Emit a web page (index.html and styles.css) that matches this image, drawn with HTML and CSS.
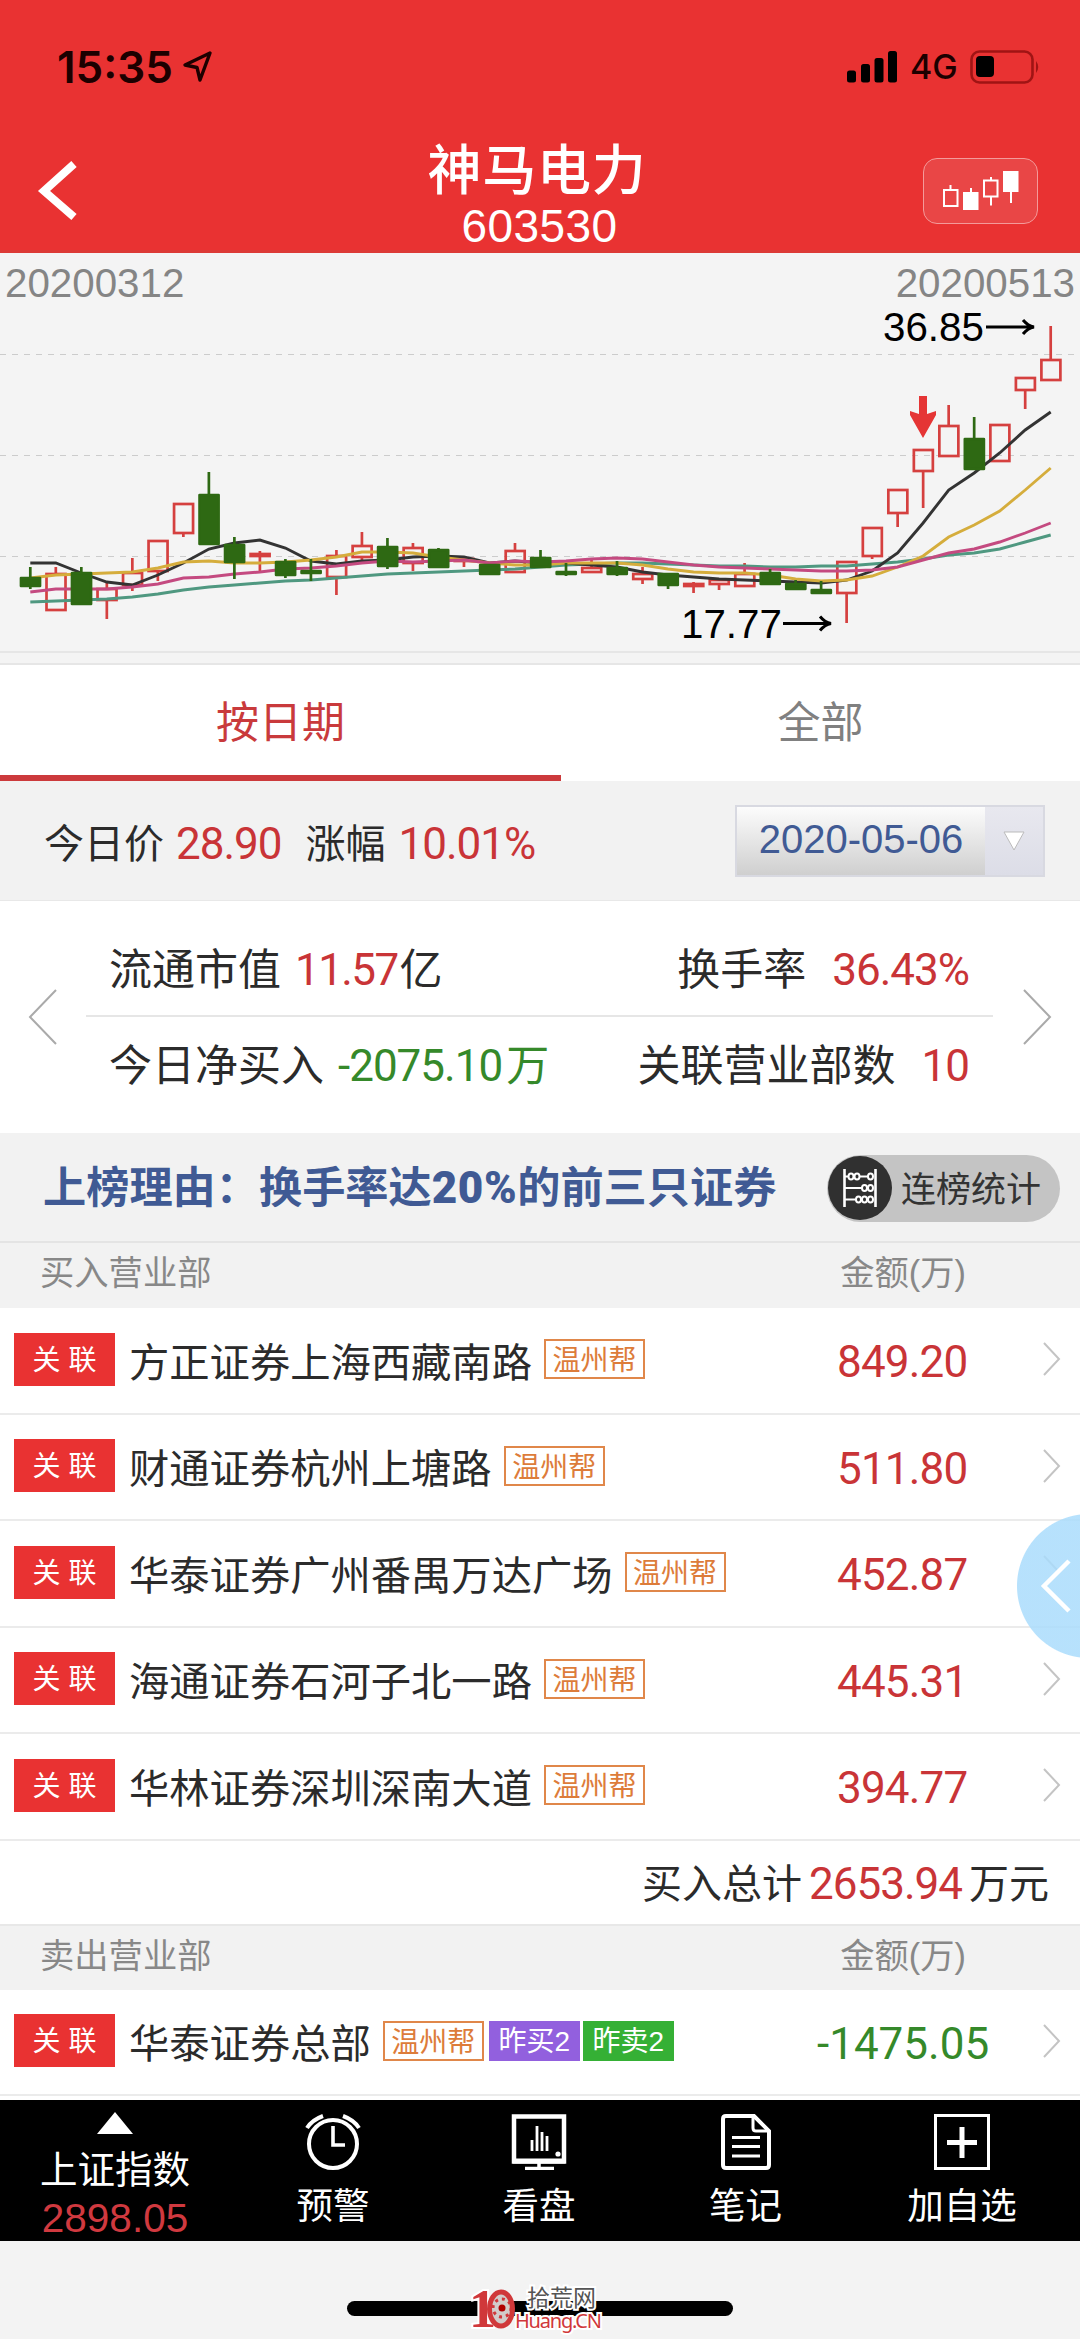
FILE: index.html
```html
<!DOCTYPE html>
<html lang="zh-CN">
<head>
  <meta charset="UTF-8" />
  <meta name="viewport" content="width=device-width, initial-scale=1.0"/>
  <title>神马电力 603530</title>
  <link rel="stylesheet" href="styles.css">
</head>
<body>

  <header class="header">
    <div class="status-bar">
      <div class="status-left">
        <span class="time">15:35</span>
        <svg class="location" width="32" height="34" viewBox="0 0 32 34"><path d="M28 3 L3 15 L15 17.500 L18 30 Z" fill="none" stroke="#1c0000" stroke-width="3.400" stroke-linejoin="round"/></svg>
      </div>
      <div class="status-right">
        <svg width="51" height="32" viewBox="0 0 51 32">
          <rect x="0" y="19.500" width="9" height="12" rx="2.500"/>
          <rect x="14" y="13" width="9" height="18.500" rx="2.500"/>
          <rect x="27.500" y="7" width="9" height="24.500" rx="2.500"/>
          <rect x="41" y="0" width="9" height="31.500" rx="2.500"/>
        </svg>
        <span class="network">4G</span>
        <svg width="72" height="34" viewBox="0 0 72 34">
          <rect x="1.500" y="1.500" width="61" height="31" rx="8" fill="none" stroke="#a01414" stroke-width="2.600"/>
          <rect x="6" y="6" width="18" height="21" rx="4"/>
          <path d="M66 11 q4.500 6 0 12 z" fill="#a01414"/>
        </svg>
      </div>
    </div>
    <div class="nav">
      <svg class="back" width="42" height="62" viewBox="0 0 42 62"><path d="M38 4 L8 31 L38 57" fill="none" stroke="#fff" stroke-width="8"/></svg>
      <div class="title">
        <h1>神马电力</h1>
        <p>603530</p>
      </div>
      <div class="kline-btn">
        <svg width="78" height="42" viewBox="0 0 78 42" fill="none" stroke="#fff" stroke-width="2">
          <rect x="2" y="20" width="13.500" height="16"/><path d="M8.500 15v5"/>
          <rect x="22" y="23" width="13.500" height="16" fill="#fff"/><path d="M29 18v5"/>
          <rect x="42" y="10.500" width="13.500" height="16"/><path d="M49 7v3.500M49 26.500v9"/>
          <rect x="62" y="2" width="13.500" height="19" fill="#fff"/><path d="M69 21v12"/>
        </svg>
      </div>
    </div>
  </header>

  <svg id="chart" class="chart" width="1080" height="412" viewBox="0 0 1080 412">
    <g class="grid">
      <path d="M0 101.500H1080M0 202.500H1080M0 303.500H1080"/>
    </g>
    <path class="frame" d="M0 399H1080M0 411H1080"/>
    <g id="candles"></g>
    <g id="lines"></g>
    <text class="date" x="5" y="44">20200312</text>
    <text class="date" x="1075" y="44" text-anchor="end">20200513</text>
    <text class="price" x="883" y="87.500">36.85</text>
    <path class="arrow" d="M986 74H1033M1023 67Q1028 73 1034 74Q1028 75 1023 81"/>
    <text class="price" x="681" y="384.500">17.77</text>
    <path class="arrow" d="M783 370.500H830M820 363.500Q825 369.500 831 370.500Q825 371.500 820 377.500"/>
    <path class="marker" d="M919 143h8v18l9 -3v4l-13 23l-13 -23v-4l9 3z"/>
  </svg>

  <nav class="tabs">
    <div class="tab active">按日期</div>
    <div class="tab">全部</div>
  </nav>

  <section class="price-bar">
    <div class="today">
      <span>今日价</span><span class="num red">28.90</span>
      <span class="chg">涨幅</span><span class="num red">10.01%</span>
    </div>
    <div class="select">
      <span class="select-value">2020-05-06</span>
      <span class="select-btn"><svg width="22" height="20" viewBox="0 0 22 20"><path d="M1 1H21L11 19Z" fill="#fff" stroke="#bbb"/></svg></span>
    </div>
  </section>

  <section class="stats">
    <svg class="turn" width="30" height="58" viewBox="0 0 30 58"><path d="M28 2L2 29L28 56"/></svg>
    <div class="stats-body">
      <div class="stats-row">
        <div>流通市值<span class="num red tight">11.57</span>亿</div>
        <div>换手率<span class="num red wide">36.43%</span></div>
      </div>
      <div class="stats-row">
        <div>今日净买入<span class="num green">-2075.10</span><span class="green">万</span></div>
        <div>关联营业部数<span class="num red wide">10</span></div>
      </div>
    </div>
    <svg class="turn" width="30" height="58" viewBox="0 0 30 58"><path d="M2 2L28 29L2 56"/></svg>
  </section>

  <section class="reason">
    <h2>上榜理由：换手率达<b>20%</b>的前三只证券</h2>
    <div class="pill">
      <span class="pill-icon">
        <svg width="36" height="38" viewBox="0 0 36 38" fill="none" stroke="#fff" stroke-width="2">
          <path d="M2.500 0V38M33.500 0V38" stroke-width="2.600"/>
          <path d="M2 7.500H6M17 7.500H26M2 19H20M2 30.500H14"/>
          <ellipse cx="9" cy="7.500" rx="2.500" ry="3"/><ellipse cx="15" cy="7.500" rx="2.500" ry="3"/><ellipse cx="28.500" cy="7.500" rx="2.500" ry="3"/>
          <ellipse cx="22.500" cy="19" rx="2.500" ry="3"/><ellipse cx="28.500" cy="19" rx="2.500" ry="3"/>
          <ellipse cx="16.500" cy="30.500" rx="2.500" ry="3"/><ellipse cx="22.500" cy="30.500" rx="2.500" ry="3"/><ellipse cx="28.500" cy="30.500" rx="2.500" ry="3"/>
        </svg>
      </span>
      <span class="pill-text">连榜统计</span>
    </div>
  </section>

  <div class="list-head"><span>买入营业部</span><span class="col-amount">金额(万)</span></div>

  <ul class="list">
    <li class="row">
      <span class="badge">关 联</span><span class="name">方正证券上海西藏南路</span><span class="tag">温州帮</span>
      <span class="amount red">849.20</span>
      <svg class="more" width="18" height="34" viewBox="0 0 18 34"><path d="M1 1L16 17L1 33"/></svg>
    </li>
    <li class="row">
      <span class="badge">关 联</span><span class="name">财通证券杭州上塘路</span><span class="tag">温州帮</span>
      <span class="amount red">511.80</span>
      <svg class="more" width="18" height="34" viewBox="0 0 18 34"><path d="M1 1L16 17L1 33"/></svg>
    </li>
    <li class="row">
      <span class="badge">关 联</span><span class="name">华泰证券广州番禺万达广场</span><span class="tag">温州帮</span>
      <span class="amount red">452.87</span>
      <svg class="more" width="18" height="34" viewBox="0 0 18 34"><path d="M1 1L16 17L1 33"/></svg>
    </li>
    <li class="row">
      <span class="badge">关 联</span><span class="name">海通证券石河子北一路</span><span class="tag">温州帮</span>
      <span class="amount red">445.31</span>
      <svg class="more" width="18" height="34" viewBox="0 0 18 34"><path d="M1 1L16 17L1 33"/></svg>
    </li>
    <li class="row">
      <span class="badge">关 联</span><span class="name">华林证券深圳深南大道</span><span class="tag">温州帮</span>
      <span class="amount red">394.77</span>
      <svg class="more" width="18" height="34" viewBox="0 0 18 34"><path d="M1 1L16 17L1 33"/></svg>
    </li>
  </ul>

  <div class="total">买入总计<span class="num red">2653.94</span>万元</div>

  <div class="list-head second"><span>卖出营业部</span><span class="col-amount">金额(万)</span></div>

  <ul class="list sell">
    <li class="row">
      <span class="badge">关 联</span><span class="name">华泰证券总部</span><span class="tag">温州帮</span><span class="tag purple">昨买2</span><span class="tag lime">昨卖2</span>
      <span class="amount green">-1475.05</span>
      <svg class="more" width="18" height="34" viewBox="0 0 18 34"><path d="M1 1L16 17L1 33"/></svg>
    </li>
  </ul>

  <footer class="toolbar">
    <div class="tool index">
      <svg width="38" height="22" viewBox="0 0 38 22"><path d="M19 0L37 22H1Z" fill="#fff"/></svg>
      <span>上证指数</span>
      <span class="index-value">2898.05</span>
    </div>
    <div class="tool">
      <svg width="56" height="56" viewBox="0 0 56 56" fill="none" stroke="#fff" stroke-width="4">
        <circle cx="28" cy="30" r="24"/><path d="M28 12V31H40" stroke-width="3.600"/><path d="M2 14Q7 6 18 2M54 14Q49 6 38 2"/>
      </svg>
      <span>预警</span>
    </div>
    <div class="tool">
      <svg width="56" height="56" viewBox="0 0 56 56" fill="none" stroke="#fff">
        <rect x="3" y="2.500" width="50" height="45" stroke-width="4.500"/><path d="M2 47H54" stroke-width="5"/><path d="M28 49V54M14 54.500H43" stroke-width="3.500"/>
        <path d="M21 37V26M26 37V12M31 37V18M36 37V22" stroke-width="2.800"/><circle cx="47" cy="40" r="2.600" fill="#fff" stroke="none"/>
      </svg>
      <span>看盘</span>
    </div>
    <div class="tool">
      <svg width="50" height="56" viewBox="0 0 50 56" fill="none" stroke="#fff" stroke-width="4">
        <path d="M5 2H33L48 17V51Q48 54 45 54H5Q2 54 2 51V5Q2 2 5 2Z"/><path d="M32 3V14Q32 17 35 17H47" stroke-width="3"/><path d="M11 23.500H39M11 32.500H39M11 42H39" stroke-width="3"/>
      </svg>
      <span>笔记</span>
    </div>
    <div class="tool">
      <svg width="56" height="56" viewBox="0 0 56 56" fill="none" stroke="#fff">
        <rect x="1.500" y="1.500" width="53" height="53" stroke-width="3"/><path d="M13 28.500H43M28 13V44" stroke-width="5"/>
      </svg>
      <span>加自选</span>
    </div>
  </footer>

  <div class="home">
    <div class="home-bar"></div>
    <div class="watermark">
      <span class="wm-one">1</span>
      <svg class="wm-wheel" width="28" height="40" viewBox="0 0 28 40">
        <ellipse cx="14" cy="20" rx="11.500" ry="17" fill="#d2ccca" stroke="#d0383a" stroke-width="5"/>
        <circle cx="15" cy="19" r="9" fill="none" stroke="#d0383a" stroke-width="3" stroke-dasharray="3 4"/>
        <circle cx="15" cy="19" r="3.500" fill="#b00000"/>
      </svg>
      <div class="wm-text">
        <span class="wm-cn">拾荒网</span>
        <span class="wm-en">Huang.CN</span>
      </div>
    </div>
  </div>

  <div class="float-btn">
    <svg width="32" height="54" viewBox="0 0 32 54"><path d="M29 2L4 27L29 52" fill="none" stroke="#fff" stroke-width="4.500"/></svg>
  </div>

  <script>
    // [color, body top, body bottom, high, low]
    const candles = [
      ["g", 324, 334, 314, 336], ["r", 320, 358, 314, 358], ["g", 319, 352, 314, 352], ["r", 335, 348, 330, 366],
      ["r", 319, 333, 305, 338], ["r", 287, 319, 287, 328], ["r", 250, 281, 250, 284], ["g", 241, 292, 219, 292],
      ["g", 291, 310, 284, 326], ["r", 300, 304, 298, 319], ["g", 308, 323, 306, 325], ["g", 317, 321, 306, 328],
      ["r", 302, 325, 297, 342], ["r", 292, 305, 279, 309], ["g", 293, 314, 285, 316], ["r", 294, 311, 290, 318],
      ["g", 296, 315, 295, 315], ["r", 305, 308, 304, 314], ["g", 311, 322, 311, 322], ["r", 297, 320, 290, 320],
      ["g", 304, 315, 297, 315], ["g", 318, 321, 310, 323], ["r", 314, 320, 306, 320], ["g", 314, 322, 308, 323],
      ["r", 320, 327, 314, 331], ["g", 320, 333, 320, 336], ["r", 330, 333, 329, 340], ["r", 326, 332, 326, 337],
      ["r", 320, 334, 310, 334], ["g", 319, 332, 316, 332], ["g", 330, 337, 327, 337], ["g", 336, 341, 328, 341],
      ["r", 308, 341, 308, 370], ["r", 274, 304, 274, 306], ["r", 236, 261, 236, 274], ["r", 196, 219, 196, 255],
      ["r", 172, 204, 152, 204], ["g", 185, 217, 164, 217], ["r", 171, 209, 171, 209], ["r", 124, 138, 124, 156],
      ["r", 106, 128, 73, 128]
    ];
    const averages = {
      teal: [349,348,347,346,344,341,337,334,332,330,328,327,325,323,321,320,319,318,317,316,314,312,311,310,310,311,312,313,313,314,314,313,313,311,309,306,302,300,296,289,282],
      black: [310,310,320,329,332,322,310,296,290,287,295,308,311,308,307,304,303,304,310,308,310,310,312,314,319,322,324,326,327,328,329,330,327,318,300,270,237,220,200,177,159],
      yellow: [325,322,321,320,319,315,309,308,310,310,309,307,304,299,299,300,304,307,310,312,312,310,310,310,312,316,319,320,320,322,326,328,327,323,314,303,284,272,258,237,215],
      pink: [339,336,336,336,334,331,325,324,321,319,316,315,313,310,308,309,308,307,310,308,309,308,306,305,306,309,312,314,315,316,317,318,318,317,314,307,300,296,289,280,270]
    };
    const xOf = i => 30.3 + i * 25.51;

    let lines = "";
    for (const name in averages) {
      const pts = averages[name].map((y, i) => xOf(i).toFixed(1) + "," + y).join(" ");
      lines += `<polyline class="ma ${name}" points="${pts}"/>`;
    }

    let red = "", green = "";
    candles.forEach(([c, top, bottom, high, low], i) => {
      const x = xOf(i);
      const wick = `<path d="M${x} ${high}V${top}M${x} ${bottom}V${low}"/>`;
      const h = Math.max(bottom - top - 2, 2);
      const body = `<rect x="${x - 9.3}" y="${top + 1}" width="19" height="${h}"/>`;
      if (c === "r") red += wick + body;
      else green += wick + body;
    });
    document.getElementById("candles").innerHTML = `<g class="up">${red}</g>`;
    // green bodies cover the average lines
    document.getElementById("lines").innerHTML = lines + `<g class="down">${green}</g>`;
  </script>

</body>
</html>
```

FILE: styles.css
```css
* {
  box-sizing: border-box;
}

body {
  margin: 0;
  width: 1080px;
  font-family: "Liberation Sans", "Noto Sans CJK SC", sans-serif;
  font-size: 40px;
  line-height: 1;
  color: #2b2b2b;
  background: #f3f3f3;
  position: relative;
}

h1, h2, p, ul {
  margin: 0;
  padding: 0;
}

svg {
  display: block;
}

.red {
  color: #c93437;
}

.green {
  color: #35892a;
}

.num {
  font-family: Roboto, sans-serif;
  font-size: 44px;
  letter-spacing: -1px;
}

/* header */
.header {
  height: 253px;
  background: #e93232;
  color: #fff;
  border-bottom: 3px solid #dc3a36;
}

.status-bar {
  height: 133px;
  padding: 0 38px 0 57px;
  display: flex;
  justify-content: space-between;
  align-items: center;
  color: #1c0000;
}

.status-left, .status-right {
  display: flex;
  align-items: center;
}

.time {
  font-family: Inter, sans-serif;
  font-size: 44px;
  font-weight: 600;
  width: 125px;
}

.network {
  font-family: Inter, sans-serif;
  font-size: 34px;
  font-weight: 500;
  width: 60px;
  margin-left: 12px;
}

.nav {
  height: 117px;
  padding: 0 42px 0 36px;
  display: grid;
  grid-template-columns: 115px 1fr 115px;
  align-items: center;
}

.back {
  margin-bottom: 3px;
}

.title {
  padding-top: 9px;
  text-align: center;
}

.title h1 {
  font-size: 54px;
  font-weight: 500;
  line-height: 59px;
  letter-spacing: 0.800px;
}

.title p {
  font-size: 46px;
  line-height: 50px;
  letter-spacing: 0.400px;
  padding-left: 5px;
}

.kline-btn {
  height: 66px;
  display: flex;
  align-items: center;
  justify-content: center;
  border: 1.500px solid #f49a9a;
  border-radius: 14px;
  background: #e94646;
  margin-bottom: 3px;
}

/* chart */
.chart {
  background: #f4f4f4;
}

.grid path {
  stroke: #ccc;
  stroke-dasharray: 6 6;
}

.frame {
  stroke: #e6e6e6;
  stroke-width: 2;
}

.date, .price {
  font-size: 40.300px;
  fill: #858585;
}

.price {
  fill: #000;
}

.arrow {
  fill: none;
  stroke: #000;
  stroke-width: 3;
}

.marker {
  fill: #e53535;
}

.up {
  fill: none;
  stroke: #d5403f;
  stroke-width: 2.700;
}

.down {
  fill: #2e6913;
  stroke: #2e6913;
  stroke-width: 2.700;
  stroke-linejoin: round;
}

.ma {
  fill: none;
  stroke-width: 2.900;
}

.ma.black { stroke: #333; }
.ma.yellow { stroke: #d5ad3c; }
.ma.pink { stroke: #c44a80; }
.ma.teal { stroke: #4f9880; }

/* tabs */
.tabs {
  height: 116px;
  display: flex;
  background: #fff;
}

.tab {
  flex: 1;
  font-size: 43px;
  line-height: 117px;
  text-align: center;
  color: #808080;
}

.tab.active {
  flex: 0 0 561px;
  color: #c93a3c;
  border-bottom: 6px solid #cc3a3c;
}

/* today price */
.price-bar {
  height: 120px;
  padding: 0 35px 0 44px;
  display: flex;
  justify-content: space-between;
  align-items: center;
  background: #f2f2f2;
  border-bottom: 1px solid #e8e8e8;
}

.today {
  display: flex;
  align-items: center;
  padding-top: 6px;
}

.today .num {
  margin-left: 12px;
}

.today .chg {
  margin-left: 24px;
}

.today .chg + .num {
  margin-left: 13px;
}

.select {
  width: 310px;
  height: 72px;
  display: flex;
  border: 2px solid #d8d9e1;
}

.select-value {
  width: 248px;
  text-align: center;
  line-height: 65px;
  color: #405a94;
  background: linear-gradient(#fcfcfc, #cfcfcf);
}

.select-btn {
  flex: 1;
  display: flex;
  align-items: center;
  justify-content: center;
  background: linear-gradient(#e8e8ef, #dcdde7);
}

/* stats */
.stats {
  height: 232px;
  display: grid;
  grid-template-columns: 86px 907px 87px;
  align-items: center;
  justify-items: center;
  background: #fff;
}

.turn path, .more path {
  fill: none;
  stroke: #aaa;
  stroke-width: 2;
}

.more path {
  stroke: #c4c4c4;
}

.stats-body {
  width: 100%;
  font-size: 43px;
}

.stats-row {
  height: 95px;
  padding: 3px 24px 0 23px;
  display: flex;
  justify-content: space-between;
  align-items: center;
}

.stats-row:first-child {
  border-bottom: 2px solid #e6e6e6;
}

.stats-row .num {
  margin: 0 4px 0 14px;
}

.stats-row .num.tight {
  margin-right: 2px;
  letter-spacing: -1.600px;
}

.stats-row .num.wide {
  margin: 0 0 0 26px;
}

/* reason */
.reason {
  height: 110px;
  padding: 2px 20px 0 43px;
  display: flex;
  justify-content: space-between;
  align-items: center;
  background: #f2f2f2;
  border-bottom: 2px solid #e4e4e4;
}

.reason h2 {
  font-size: 43.200px;
  font-weight: 700;
  color: #405a94;
}

.reason b {
  font-family: Roboto, sans-serif;
  font-size: 44px;
  letter-spacing: 0.600px;
}

.pill {
  width: 233px;
  height: 67px;
  padding-left: 1px;
  display: flex;
  align-items: center;
  gap: 9px;
  border-radius: 34px;
  background: #c4c4c4;
  font-size: 35px;
  color: #333;
}

.pill-text {
  padding-top: 2px;
}

.pill-icon {
  width: 64px;
  height: 64px;
  display: flex;
  align-items: center;
  justify-content: center;
  border-radius: 50%;
  background: #303030;
}

/* branch lists */
.list-head {
  height: 65px;
  padding: 0 114px 0 40px;
  display: flex;
  justify-content: space-between;
  font-size: 34.300px;
  line-height: 61px;
  color: #888;
  background: #f2f2f2;
}

.list-head.second {
  height: 66px;
  border-top: 2px solid #e8e8e8;
}

.list {
  list-style: none;
  background: #fff;
}

.row {
  height: 106.500px;
  padding: 0 19px 2px 14px;
  display: flex;
  align-items: center;
  border-bottom: 2px solid #ebebeb;
}

.badge {
  width: 101px;
  height: 53px;
  line-height: 56px;
  text-align: center;
  font-size: 28px;
  color: #fff;
  background: #e93232;
}

.name {
  margin: 9px 12px 0 14px;
  font-size: 40.300px;
}

.tag {
  width: 101px;
  height: 40px;
  line-height: 40px;
  text-align: center;
  font-size: 28px;
  color: #dd7c3a;
  border: 2px solid #e0874a;
}

.tag.purple, .tag.lime {
  width: 91px;
  margin-left: 5px;
  line-height: 42px;
  border: none;
  color: #fff;
  background: #9260de;
}

.tag.lime {
  margin-left: 3px;
  background: #35b035;
}

.amount {
  margin-left: auto;
  margin-top: 6px;
  width: 206px;
  font-family: Roboto, sans-serif;
  font-size: 44px;
  letter-spacing: -0.800px;
}

.amount.green {
  width: 226px;
  letter-spacing: 0;
}

.total {
  height: 83px;
  padding: 4px 31px 0 0;
  display: flex;
  align-items: center;
  justify-content: flex-end;
  background: #fff;
}

.total .num {
  margin: 0 7px;
}

.sell {
  height: 110px;
}

/* bottom toolbar */
.toolbar {
  height: 141px;
  padding: 0 15px 0 10px;
  display: grid;
  grid-template-columns: 210px 226px 186px 227px 1fr;
  background: #000;
  color: #fff;
  font-size: 36.500px;
}

.tool {
  display: flex;
  flex-direction: column;
  align-items: center;
  padding-top: 14px;
  gap: 19px;
}

.tool.index {
  padding-top: 12px;
  gap: 18px;
  font-size: 37.500px;
}

.index-value {
  margin-top: -9px;
  font-size: 40.500px;
  color: #d0393f;
}

/* home area */
.home {
  height: 98px;
  padding-top: 60px;
  position: relative;
}

.home-bar {
  width: 386px;
  height: 15px;
  margin-left: 347px;
  border-radius: 8px;
  background: #000;
}

.watermark {
  position: absolute;
  left: 474px;
  top: 46px;
  display: flex;
  align-items: center;
  color: #d0383a;
}

.watermark span {
  -webkit-text-stroke: 4px #fff;
  paint-order: stroke fill;
}

.wm-one {
  width: 16px;
  font-family: "Liberation Serif", serif;
  font-size: 54px;
  font-weight: 700;
  line-height: 42px;
  margin-left: -5px;
  margin-right: 2px;
}

.wm-text {
  display: flex;
  flex-direction: column;
}

.wm-cn {
  margin-left: 12px;
  font-size: 23px;
  color: #555;
}

.wm-en {
  font-family: "Noto Sans", sans-serif;
  font-size: 20px;
  line-height: 22px;
  letter-spacing: -1.200px;
}

/* floating handle at the screen edge */
.float-btn {
  position: absolute;
  top: 1514px;
  right: 0;
  width: 63px;
  height: 144px;
  padding-left: 23px;
  display: flex;
  align-items: center;
  background: radial-gradient(circle at 72px 72px, rgba(170, 220, 252, 0.850) 71.500px, transparent 72.500px);
}
```
